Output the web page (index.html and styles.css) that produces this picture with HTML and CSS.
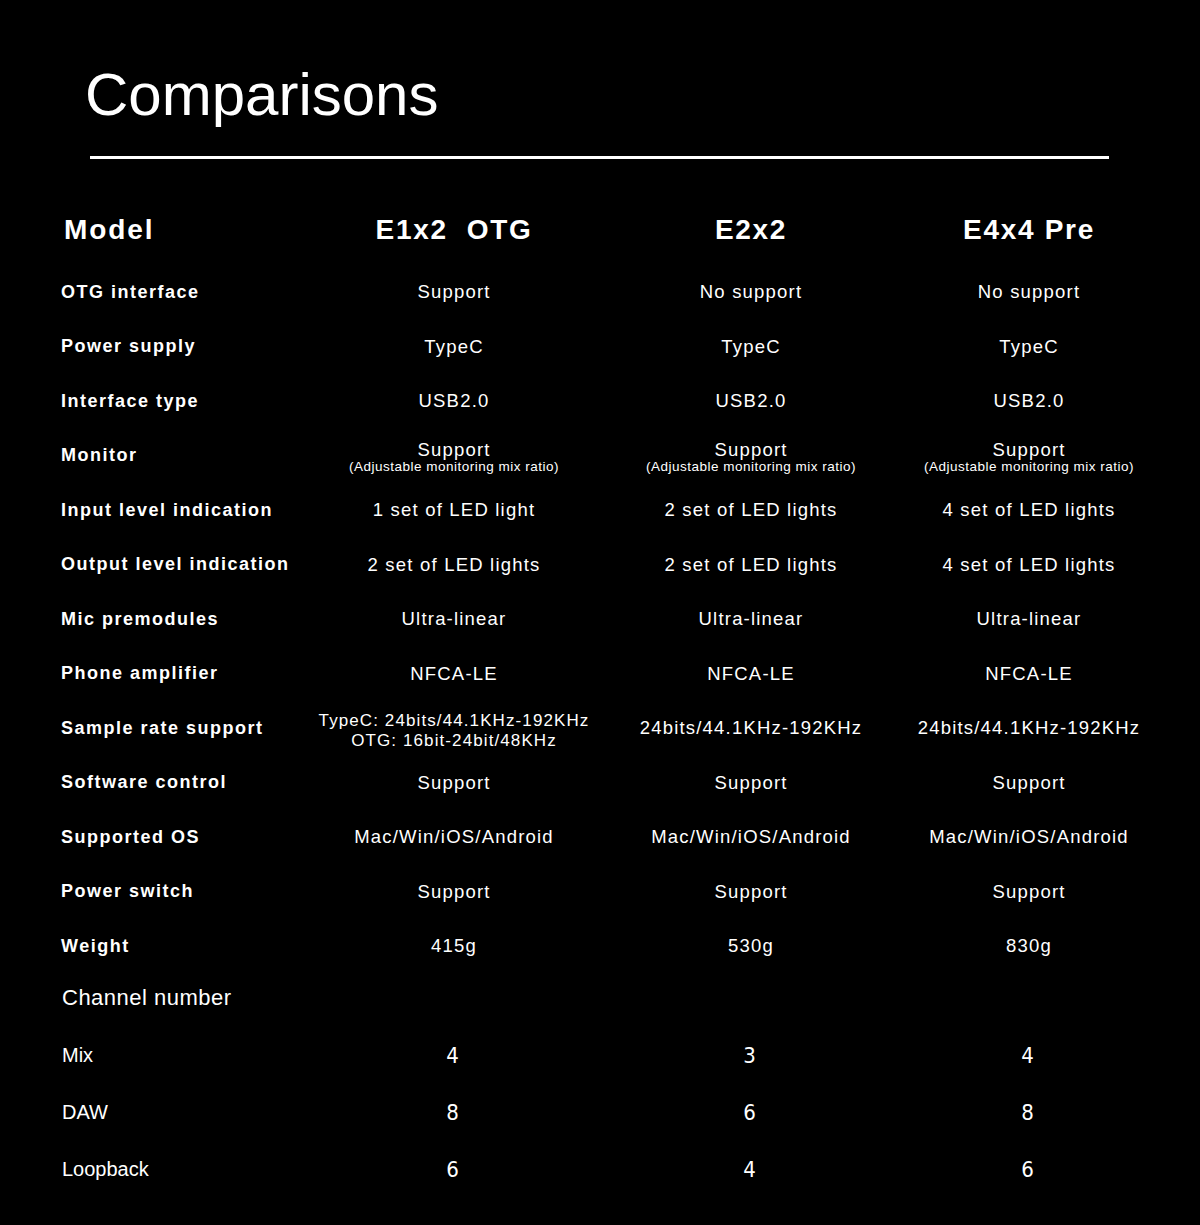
FILE: index.html
```html
<!DOCTYPE html>
<html lang="en">
<head>
<meta charset="utf-8">
<title>Comparisons</title>
<link rel="stylesheet" href="styles.css">
</head>
<body>
<div class="page">
  <h1 class="title">Comparisons</h1>
  <div class="rule"></div>

  <div class="table">
    <div class="row head">
      <div class="label">Model</div>
      <div class="cell">E1x2&nbsp;&nbsp;OTG</div>
      <div class="cell">E2x2</div>
      <div class="cell">E4x4 Pre</div>
    </div>

    <div class="row">
      <div class="label">OTG interface</div>
      <div class="cell">Support</div>
      <div class="cell">No support</div>
      <div class="cell">No support</div>
    </div>
    <div class="row">
      <div class="label">Power supply</div>
      <div class="cell">TypeC</div>
      <div class="cell">TypeC</div>
      <div class="cell">TypeC</div>
    </div>
    <div class="row">
      <div class="label">Interface type</div>
      <div class="cell">USB2.0</div>
      <div class="cell">USB2.0</div>
      <div class="cell">USB2.0</div>
    </div>
    <div class="row">
      <div class="label">Monitor</div>
      <div class="cell stack monitor"><span class="main">Support</span><span class="sub">(Adjustable monitoring mix ratio)</span></div>
      <div class="cell stack monitor"><span class="main">Support</span><span class="sub">(Adjustable monitoring mix ratio)</span></div>
      <div class="cell stack monitor"><span class="main">Support</span><span class="sub">(Adjustable monitoring mix ratio)</span></div>
    </div>
    <div class="row">
      <div class="label">Input level indication</div>
      <div class="cell">1 set of LED light</div>
      <div class="cell">2 set of LED lights</div>
      <div class="cell">4 set of LED lights</div>
    </div>
    <div class="row">
      <div class="label">Output level indication</div>
      <div class="cell">2 set of LED lights</div>
      <div class="cell">2 set of LED lights</div>
      <div class="cell">4 set of LED lights</div>
    </div>
    <div class="row">
      <div class="label">Mic premodules</div>
      <div class="cell">Ultra-linear</div>
      <div class="cell">Ultra-linear</div>
      <div class="cell">Ultra-linear</div>
    </div>
    <div class="row">
      <div class="label">Phone amplifier</div>
      <div class="cell">NFCA-LE</div>
      <div class="cell">NFCA-LE</div>
      <div class="cell">NFCA-LE</div>
    </div>
    <div class="row">
      <div class="label">Sample rate support</div>
      <div class="cell stack sample"><span>TypeC: 24bits/44.1KHz-192KHz</span><span>OTG: 16bit-24bit/48KHz</span></div>
      <div class="cell">24bits/44.1KHz-192KHz</div>
      <div class="cell">24bits/44.1KHz-192KHz</div>
    </div>
    <div class="row">
      <div class="label">Software control</div>
      <div class="cell">Support</div>
      <div class="cell">Support</div>
      <div class="cell">Support</div>
    </div>
    <div class="row">
      <div class="label">Supported OS</div>
      <div class="cell">Mac/Win/iOS/Android</div>
      <div class="cell">Mac/Win/iOS/Android</div>
      <div class="cell">Mac/Win/iOS/Android</div>
    </div>
    <div class="row">
      <div class="label">Power switch</div>
      <div class="cell">Support</div>
      <div class="cell">Support</div>
      <div class="cell">Support</div>
    </div>
    <div class="row">
      <div class="label">Weight</div>
      <div class="cell">415g</div>
      <div class="cell">530g</div>
      <div class="cell">830g</div>
    </div>

    <div class="row group">
      <div class="label plain-lg">Channel number</div>
    </div>
    <div class="row sub-row">
      <div class="label plain">Mix</div>
      <div class="cell num">4</div>
      <div class="cell num">3</div>
      <div class="cell num">4</div>
    </div>
    <div class="row sub-row">
      <div class="label plain">DAW</div>
      <div class="cell num">8</div>
      <div class="cell num">6</div>
      <div class="cell num">8</div>
    </div>
    <div class="row sub-row">
      <div class="label plain">Loopback</div>
      <div class="cell num">6</div>
      <div class="cell num">4</div>
      <div class="cell num">6</div>
    </div>
  </div>
</div>
</body>
</html>
```

FILE: styles.css
```css
* { box-sizing: border-box; }

html, body {
  margin: 0;
  padding: 0;
  background: #000;
}

body {
  color: #fff;
  font-family: "Liberation Sans", Arial, sans-serif;
}

.page {
  width: 1200px;
  height: 1225px;
  padding-top: 65px;
  background: #000;
  overflow: hidden;
}

.title {
  margin: 0 0 0 85px;
  font-size: 60px;
  line-height: 60px;
  font-weight: 400;
  letter-spacing: 0;
}

.rule {
  margin: 31px 0 0 90px;
  width: 1019px;
  height: 3px;
  background: #fff;
}

.table {
  margin-top: 35px;
  padding-left: 61px;
}

.row {
  display: grid;
  grid-template-columns: 244px 298px 296px 260px;
  align-items: center;
  height: 54.5px;
}

.row.head {
  height: 71px;
}

.label {
  font-weight: 700;
  font-size: 18px;
  letter-spacing: 1.5px;
  white-space: nowrap;
}

.head .label {
  font-size: 28px;
  letter-spacing: 1.9px;
  padding-left: 3px;
}

.cell {
  text-align: center;
  font-size: 18.5px;
  letter-spacing: 1.2px;
  white-space: nowrap;
}

.head .cell {
  font-size: 28px;
  font-weight: 700;
  letter-spacing: 1.7px;
}

.stack {
  display: flex;
  flex-direction: column;
  align-items: center;
}

.monitor {
  padding-top: 4px;
}

.monitor .main {
  line-height: 19px;
}

.monitor .sub {
  font-size: 13.5px;
  line-height: 16px;
  letter-spacing: 0.5px;
}

.sample {
  font-size: 17px;
  line-height: 20px;
  letter-spacing: 1.1px;
  padding-top: 6px;
}

.row.group {
  height: 53px;
  padding-bottom: 5px;
}

.plain-lg {
  font-weight: 400;
  font-size: 22px;
  letter-spacing: 0.5px;
  padding-left: 1px;
}

.row.sub-row {
  height: 57px;
}

.plain {
  font-weight: 400;
  font-size: 20px;
  letter-spacing: 0;
  padding-left: 1px;
}

.num {
  font-family: "DejaVu Sans Condensed", "Noto Sans", "Liberation Sans", sans-serif;
  font-stretch: condensed;
  font-size: 22px;
  letter-spacing: 0;
  padding-right: 3px;
}
```
